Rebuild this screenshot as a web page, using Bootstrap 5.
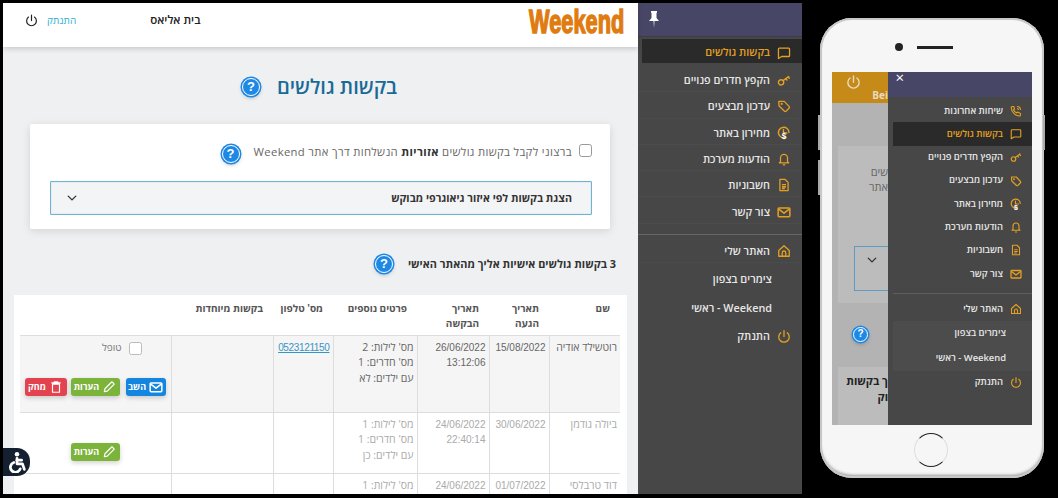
<!DOCTYPE html>
<html lang="he" dir="rtl">
<head>
    <meta charset="UTF-8">
    <title>בקשות גולשים</title>
    <meta name="viewport" content="width=device-width, initial-scale=1">
    <link href="https://cdn.jsdelivr.net/npm/bootstrap@5.3.2/dist/css/bootstrap.min.css" rel="stylesheet">
    <style>
        html, body { height: 498px; }
        body {
            background: #000;
            overflow: hidden;
            margin: 0;
            font-family: "Open Sans", "Liberation Sans", sans-serif;
            font-size: 11px;
            color: #333;
        }
        .collage { height: 498px; padding: 3px 14px 4px 2px; gap: 18px; direction: ltr; }
        .collage > * { direction: rtl; }

        /* desktop window */
        .desk { width: 800px; height: 491px; overflow: hidden; position: relative; padding-left: 1px; flex: none; }
        .side { width: 164px; flex: none; background: #474747; }
        .side-head { height: 34px; background: #474666; padding-right: 143px; padding-top: 7px; border-bottom: 1px solid #3b3b4c; }
        .main-area { width: 635px; flex: none; background: #eef0f2; }

        .topbar { height: 44px; background: #fff; box-shadow: 0 2px 5px rgba(0,0,0,.16); padding: 0 14px 10px 22px; position: relative; }
        .logo { font-family: "Liberation Sans", sans-serif; font-weight: 700; font-size: 33px; color: #e07b10; -webkit-text-stroke: 1.500px #e07b10; line-height: 1; margin-top: 2px; direction: ltr; transform: scaleX(.66); transform-origin: right center; }
        .user-name { font-size: 11.500px; font-weight: 600; color: #222; margin-left: 74px; }
        .logout-link { font-size: 10px; color: #2fb0d0; text-decoration: none; margin-left: 9px; }
        .logout-ico { width: 13px; height: 14px; color: #222; }

        .page-title { margin: 28px 0 0; height: 24px; gap: 17px; padding-right: 2px; }
        .page-title h1 { font-size: 20px; font-weight: 600; color: #1a6a96; margin: 0; }
        .help-dot {
            width: 18px; height: 18px; flex: none; border-radius: 50%; background: #1e88e5; color: #fff;
            border: 1.500px solid #fff; box-shadow: 0 0 0 1.500px #1e88e5, 0 2px 4px rgba(0,0,0,.25);
            font: 700 13px/15px "Liberation Sans", sans-serif; text-align: center; direction: ltr;
        }

        .opt-card { width: 580px; height: 105px; margin: 25px 28px 0 0; padding: 19px 18px 0 20px; border: 0; border-radius: 2px; box-shadow: 0 2px 8px rgba(0,0,0,.12); }
        .opt-line { height: 14px; color: #666; font-size: 11.250px; letter-spacing: .35px; }
        .opt-check { width: 13px; height: 13px; margin: 0 0 0 7px; border-color: #999; flex: none; }
        .opt-line b { color: #333; }
        .opt-line span:not(.help-dot) { margin-top: 4px; }
        .opt-line .help-dot { margin-right: 14px; margin-top: 8px; }
        .region-btn { height: 34px; margin-top: 24px; width: 100%; border: 1px solid #6fb3d2; border-radius: 1px; background: #f3f4f5; padding: 0 19px 0 15px; font-size: 10.700px; font-weight: 700; color: #333; box-shadow: inset 0 0 1px #6fb3d2; }
        .chev { width: 12px; height: 12px; color: #333; }

        .req-head { margin: 25px 22px 0 0; height: 20px; font-size: 10.900px; font-weight: 700; color: #333; gap: 15px; }

        .table-panel { background: #fff; margin: 21px 11px 0 11px; padding: 0 7px 0 6px; height: 220px; }
        .req-table { table-layout: fixed; width: 600px; margin: 0; font-size: 10.500px; border-collapse: collapse; }
        .req-table th { height: 40px; padding: 6px 10px 0 0; vertical-align: top; font-size: 10px; font-weight: 700; color: #555; line-height: 15px; border-bottom: 1px solid #ddd; background: #fff; box-shadow: none; }
        .req-table td { padding: 4px 3px 0 0; vertical-align: top; line-height: 15.500px; color: #666; border: 0; border-left: 1px solid #ddd; border-bottom: 1px solid #ddd; background: transparent; box-shadow: none; }
        .req-table td:last-child { border-left: 0; }
        .req-table th:nth-child(1) { width: 71px; }
        .req-table th:nth-child(2) { width: 60px; }
        .req-table th:nth-child(3) { width: 72px; }
        .req-table th:nth-child(4) { width: 84px; }
        .req-table th:nth-child(5) { width: 60px; }
        .req-table th:nth-child(6) { width: 102px; }
        .req-table tr.row-open td { height: 77px; background: #f5f5f5; }
        .req-table tr.row-done td { height: 61px; color: #aaa; }
        .req-table td.req-num { font-family: "Liberation Sans", sans-serif; font-size: 10px; }
        .req-table a { color: #3a94c4; letter-spacing: -.35px; }
        .done-check { height: 14px; padding: 3px 26px 0 0; color: #777; font-size: 10px; gap: 7px; }
        .done-check input { width: 13px; height: 13px; margin: 0; border-color: #bbb; }
        .act-row { padding-right: 2px; gap: 4px; }
        .open-acts { margin-top: 24px; }
        .done-acts { margin-top: 26px; }
        .act-btn { height: 18px; padding: 0 3px; font-size: 9px; font-weight: 700; line-height: 18px; border: 0; border-radius: 3px; color: #fff; gap: 3px; box-shadow: 0 2px 5px rgba(0,0,0,.18); }
        .act-btn svg { width: 14px; height: 14px; flex: none; }
        .act-reply { background: #1486e0; width: 40px; margin-left: 2px; }
        .act-note { background: #7cb33a; width: 49px; }
        .act-del { background: #e2434f; width: 42px; }

        .a11y { position: absolute; left: 1px; top: 445px; width: 27px; height: 28px; background: #14202f; border-radius: 0 13px 13px 0; color: #fff; }
        .a11y svg { width: 22px; height: 22px; }

        /* side menu */
        .menu-link { height: 26.300px; padding: 3px 11px 0 0; font-size: 10.800px; font-weight: 600; color: #e6e6e6; gap: 7px; border-bottom: 1px solid #4c4c4c; }
        .menu-link:last-child { border-bottom: 0; }
        .menu-link svg { width: 14px; height: 14px; color: #e5a021; flex: none; }
        .menu-link.on { background: #2a2a2a; color: #e5a021; border-bottom: 0; }
        .side-nav { padding-top: 2px; }
        .side-nav .menu-link.on { margin-left: 4px; height: 24px; margin-bottom: 3px; }
        .menu-sub { height: 29px; padding: 3px 30px 0 0; font-size: 10.800px; font-weight: 600; color: #e6e6e6; }
        .menu-rule { height: 1px; background: #666; margin: 10px 0 2px; }

        /* phone */
        .phone { width: 224px; height: 460px; margin-top: 15px; flex: none; background: #f6f6f6; border-radius: 32px; box-shadow: inset 0 0 0 2px #c8c8c8, inset 0 -3px 3px #999; padding: 54px 12px 53px; position: relative; }
        .phone::before { content: ""; position: absolute; left: -2px; top: 97px; width: 2px; height: 35px; background: #aaa; box-shadow: 0 45px 0 #aaa; }
        .phone::after { content: ""; position: absolute; right: -1px; top: 97px; width: 2px; height: 35px; background: #aaa; }
        .phone-top { position: absolute; top: 25px; left: 0; right: 0; height: 8px; gap: 14px; direction: ltr; padding-right: 16px; }
        .phone-cam { width: 8px; height: 8px; border-radius: 50%; background: #222; }
        .phone-speaker { width: 36px; height: 3px; background: #222; }
        .phone-home { position: absolute; bottom: 11px; left: 94px; width: 34px; height: 34px; border-radius: 50%; border: 1.500px solid #222; border-left-color: #ddd; border-right-color: #ddd; }
        .phone-screen { height: 353px; background: #b3b3b3; }
        .m-menu { width: 144px; flex: none; background: #474747; }
        .m-head { height: 25px; background: #474666; padding: 0 128px 0 0; color: #fff; font-size: 15px; line-height: 10px; }
        .m-nav { padding-top: 2px; }
        .m-link { height: 23.300px; padding: 0 10px 0 0; font-size: 9.400px; font-weight: 600; color: #e6e6e6; gap: 7px; }
        .m-link svg { width: 12px; height: 12px; color: #e5a021; flex: none; }
        .m-link.on { background: #2a2a2a; color: #e5a021; margin-left: 5px; }
        .m-rule { height: 1px; background: #5e5e5e; margin: 8px 0 3px 5px; }
        .m-sub { height: 25px; padding: 0 26px 0 0; margin-left: 5px; font-size: 9.400px; font-weight: 600; color: #e6e6e6; background: #4c4c4c; }
        .m-dim { width: 56px; flex: none; overflow: hidden; }
        .m-dim-head { height: 31px; background: #c58a18; color: #e9dcc0; padding: 2px 27px 0 0; font-weight: 700; font-size: 10px; }
        .m-dim-head svg { width: 15px; height: 15px; display: block; margin-left: -4px; }
        .m-dim-head span { display: block; margin: 0 -27px 0 0; line-height: 13px; text-align: right; }
        .m-dim-card { background: #bcbcbc; margin: 43px 0 0 6px; height: 157px; padding-top: 18px; font-size: 11px; line-height: 15px; color: #666; text-align: right; }
        .m-dim-box { height: 45px; margin: 52px 0 0 16px; border: 1px solid #5b9cc4; border-right: 0; padding: 7px 0 0 11px; direction: ltr; }
        .m-dim-box svg { display: block; }
        .m-dim-help { width: 15px; height: 15px; margin: 24px 20px 0 0; font-size: 10px; line-height: 12px; }
        .m-dim-card2 { background: #bcbcbc; margin: 25px 0 0 6px; height: 58px; padding-top: 6px; font-size: 11px; font-weight: 700; line-height: 16px; color: #222; text-align: right; overflow: hidden; white-space: nowrap; }
    </style>
</head>
<body>

    <!-- icons used by both menus -->
    <svg class="d-none">
        <symbol id="i-chat" viewBox="0 0 24 24" fill="none" stroke="currentColor" stroke-width="2.200" stroke-linejoin="round"><path d="M2.500 5a1.500 1.500 0 0 1 1.500-1.500h16A1.500 1.500 0 0 1 21.500 5v11.500A1.500 1.500 0 0 1 20 18H8l-5.500 3.500z"/></symbol>
        <symbol id="i-key" viewBox="0 0 24 24" fill="none" stroke="currentColor" stroke-width="2.400" stroke-linecap="round"><circle cx="7" cy="16" r="4.500"/><path d="M10.500 13 20 6M15 9.500l2 2.500M19 6.500l2 2.500"/></symbol>
        <symbol id="i-tag" viewBox="0 0 24 24" fill="none" stroke="currentColor" stroke-width="2.200" stroke-linejoin="round"><path d="M3 4h9.500L21 13a2 2 0 0 1 0 2.500L15.500 21a2 2 0 0 1-2.500 0L3.500 12z"/><circle cx="8" cy="8.500" r=".8"/></symbol>
        <symbol id="i-clock" viewBox="0 0 24 24" fill="none" stroke="currentColor" stroke-width="2.400" stroke-linecap="round"><path d="M15 19.500A9 9 0 1 1 20.500 11"/><path d="M11 6v6h6"/><text x="16" y="23" font-size="14" font-weight="700" fill="#fff" stroke="none" font-family="Liberation Sans">$</text></symbol>
        <symbol id="i-bell" viewBox="0 0 24 24" fill="none" stroke="currentColor" stroke-width="2.200" stroke-linejoin="round"><path d="M6 17V10a6 6 0 0 1 12 0v7l2 1.500H4z"/><path d="M10 22h4"/></symbol>
        <symbol id="i-doc" viewBox="0 0 24 24" fill="none" stroke="currentColor" stroke-width="2.200" stroke-linejoin="round"><path d="M5 2.500h9l5 5V21.500H5z"/><path d="M8.500 11.500h7M8.500 15h7M8.500 18h5"/></symbol>
        <symbol id="i-mail" viewBox="0 0 24 24" fill="none" stroke="currentColor" stroke-width="2.600" stroke-linejoin="round"><rect x="2" y="5" width="20" height="15" rx="1.500"/><path d="m3 7 9 7 9-7"/></symbol>
        <symbol id="i-home" viewBox="0 0 24 24" fill="none" stroke="currentColor" stroke-width="2.200" stroke-linejoin="round"><path d="M3 11 12 3l9 8v10H3z"/><path d="M9 21v-6a3 3 0 0 1 6 0v6"/></symbol>
        <symbol id="i-power" viewBox="0 0 24 24" fill="none" stroke="currentColor" stroke-width="2.200" stroke-linecap="round"><path d="M12 3v10M6.500 6.500a9 9 0 1 0 11 0"/></symbol>
        <symbol id="i-call" viewBox="0 0 24 24" fill="none" stroke="currentColor" stroke-width="2.200" stroke-linejoin="round"><path d="M21 17v3a2 2 0 0 1-2 2C10.500 21.500 3 14 2.500 5.500a2 2 0 0 1 2-2.500h3l1.500 5-2 1.500c1 2.500 3.500 5 6.500 6.500l1.500-2z"/><path d="M14 3a7 7 0 0 1 7 7M14 7a3 3 0 0 1 3 3"/></symbol>
        <symbol id="i-pen" viewBox="0 0 24 24" fill="none" stroke="currentColor" stroke-width="2" stroke-linejoin="round"><path d="M4 20l1-5L17 3l4 4L9 19z"/></symbol>
        <symbol id="i-trash" viewBox="0 0 24 24" fill="none" stroke="currentColor" stroke-width="2" stroke-linejoin="round"><path d="M6 7h12v14H6zM4 5h16M9 5V3h6v2"/></symbol>
        <symbol id="i-chev" viewBox="0 0 16 16" fill="none" stroke="currentColor" stroke-width="1.800" stroke-linecap="round" stroke-linejoin="round"><path d="m3 5.500 5 5 5-5"/></symbol>
    </svg>

    <div class="collage d-flex align-items-start">

        <!-- desktop -->
        <div class="desk d-flex">
            <aside class="side">
                <div class="side-head">
                    <svg width="10" height="17" viewBox="0 0 10 17" fill="#fff"><path d="M2 0h6v1.500L7.500 2v5L10 10H5.500L5 17l-.5-7H0l2.500-3V2L2 1.500z"/></svg>
                </div>
                <nav class="side-nav nav flex-column">
                    <a class="menu-link on d-flex align-items-center text-decoration-none" href="#"><svg><use href="#i-chat"/></svg>בקשות גולשים</a>
                    <a class="menu-link d-flex align-items-center text-decoration-none" href="#"><svg><use href="#i-key"/></svg>הקפץ חדרים פנויים</a>
                    <a class="menu-link d-flex align-items-center text-decoration-none" href="#"><svg><use href="#i-tag"/></svg>עדכון מבצעים</a>
                    <a class="menu-link d-flex align-items-center text-decoration-none" href="#"><svg><use href="#i-clock"/></svg>מחירון באתר</a>
                    <a class="menu-link d-flex align-items-center text-decoration-none" href="#"><svg><use href="#i-bell"/></svg>הודעות מערכת</a>
                    <a class="menu-link d-flex align-items-center text-decoration-none" href="#"><svg><use href="#i-doc"/></svg>חשבוניות</a>
                    <a class="menu-link d-flex align-items-center text-decoration-none" href="#"><svg><use href="#i-mail"/></svg>צור קשר</a>
                    <div class="menu-rule"></div>
                    <a class="menu-link d-flex align-items-center text-decoration-none" href="#"><svg><use href="#i-home"/></svg>האתר שלי</a>
                    <a class="menu-sub d-flex align-items-center text-decoration-none" href="#">צימרים בצפון</a>
                    <a class="menu-sub d-flex align-items-center text-decoration-none" href="#">Weekend - ראשי</a>
                    <a class="menu-link d-flex align-items-center text-decoration-none" href="#"><svg><use href="#i-power"/></svg>התנתק</a>
                </nav>
            </aside>

            <main class="main-area">
                <header class="topbar d-flex align-items-center justify-content-between">
                    <div class="logo">Weekend</div>
                    <div class="d-flex align-items-center">
                        <span class="user-name">בית אליאס</span>
                        <a class="logout-link" href="#">התנתק</a>
                        <svg class="logout-ico"><use href="#i-power"/></svg>
                    </div>
                </header>

                <div class="page-title d-flex align-items-center justify-content-center">
                    <h1>בקשות גולשים</h1>
                    <span class="help-dot">?</span>
                </div>

                <div class="opt-card card">
                    <div class="opt-line d-flex align-items-center">
                        <input class="form-check-input opt-check" type="checkbox">
                        <span>ברצוני לקבל בקשות גולשים <b>אזוריות</b> הנשלחות דרך אתר Weekend</span>
                        <span class="help-dot">?</span>
                    </div>
                    <button class="region-btn d-flex align-items-center justify-content-between" type="button">
                        <span>הצגת בקשות לפי איזור גיאוגרפי מבוקש</span>
                        <svg class="chev"><use href="#i-chev"/></svg>
                    </button>
                </div>

                <div class="req-head d-flex align-items-center">
                    <span>3 בקשות גולשים אישיות אליך מהאתר האישי</span>
                    <span class="help-dot">?</span>
                </div>

                <div class="table-panel">
                    <table class="table req-table">
                        <thead>
                            <tr>
                                <th>שם</th>
                                <th>תאריך הגעה</th>
                                <th>תאריך הבקשה</th>
                                <th>פרטים נוספים</th>
                                <th>מס' טלפון</th>
                                <th>בקשות מיוחדות</th>
                                <th></th>
                            </tr>
                        </thead>
                        <tbody>
                            <tr class="row-open">
                                <td>רוטשילד אודיה</td>
                                <td class="req-num">15/08/2022</td>
                                <td class="req-num">26/06/2022<br>13:12:06</td>
                                <td>מס' לילות: 2<br>מס' חדרים: 1<br>עם ילדים: לא</td>
                                <td class="req-num"><a href="#">0523121150</a></td>
                                <td></td>
                                <td>
                                    <label class="done-check d-flex align-items-center">
                                        <input class="form-check-input" type="checkbox">
                                        <span>טופל</span>
                                    </label>
                                    <div class="act-row open-acts d-flex">
                                        <button class="act-btn act-reply d-flex align-items-center justify-content-center" type="button"><svg><use href="#i-mail"/></svg>השב</button>
                                        <button class="act-btn act-note d-flex align-items-center justify-content-center" type="button"><svg><use href="#i-pen"/></svg>הערות</button>
                                        <button class="act-btn act-del d-flex align-items-center justify-content-center" type="button"><svg><use href="#i-trash"/></svg>מחק</button>
                                    </div>
                                </td>
                            </tr>
                            <tr class="row-done">
                                <td>ביולה גודמן</td>
                                <td class="req-num">30/06/2022</td>
                                <td class="req-num">24/06/2022<br>22:40:14</td>
                                <td>מס' לילות: 1<br>מס' חדרים: 1<br>עם ילדים: כן</td>
                                <td></td>
                                <td></td>
                                <td>
                                    <div class="act-row done-acts d-flex">
                                        <span class="act-reply invisible"></span>
                                        <button class="act-btn act-note d-flex align-items-center justify-content-center" type="button"><svg><use href="#i-pen"/></svg>הערות</button>
                                    </div>
                                </td>
                            </tr>
                            <tr class="row-done">
                                <td>דוד טרבלסי</td>
                                <td class="req-num">01/07/2022</td>
                                <td class="req-num">24/06/2022</td>
                                <td>מס' לילות: 1</td>
                                <td></td>
                                <td></td>
                                <td></td>
                            </tr>
                        </tbody>
                    </table>
                </div>
            </main>

            <div class="a11y d-flex align-items-center justify-content-center">
                <svg viewBox="0 0 24 24" fill="none" stroke="currentColor" stroke-width="3" stroke-linecap="round" stroke-linejoin="round"><circle cx="12" cy="3.500" r="2.500" fill="currentColor" stroke="none"/><path d="M12 8v6h6l2 6"/><path d="M12 10h5"/><path d="M8.500 12.500a5.500 5.500 0 1 0 7 7"/></svg>
            </div>
        </div>

        <!-- phone -->
        <div class="phone">
            <div class="phone-top d-flex align-items-center justify-content-center">
                <span class="phone-cam"></span>
                <span class="phone-speaker"></span>
            </div>
            <div class="phone-screen d-flex">
                <div class="m-menu">
                    <div class="m-head d-flex">×</div>
                    <nav class="m-nav nav flex-column">
                        <a class="m-link d-flex align-items-center text-decoration-none" href="#"><svg><use href="#i-call"/></svg>שיחות אחרונות</a>
                        <a class="m-link on d-flex align-items-center text-decoration-none" href="#"><svg><use href="#i-chat"/></svg>בקשות גולשים</a>
                        <a class="m-link d-flex align-items-center text-decoration-none" href="#"><svg><use href="#i-key"/></svg>הקפץ חדרים פנויים</a>
                        <a class="m-link d-flex align-items-center text-decoration-none" href="#"><svg><use href="#i-tag"/></svg>עדכון מבצעים</a>
                        <a class="m-link d-flex align-items-center text-decoration-none" href="#"><svg><use href="#i-clock"/></svg>מחירון באתר</a>
                        <a class="m-link d-flex align-items-center text-decoration-none" href="#"><svg><use href="#i-bell"/></svg>הודעות מערכת</a>
                        <a class="m-link d-flex align-items-center text-decoration-none" href="#"><svg><use href="#i-doc"/></svg>חשבוניות</a>
                        <a class="m-link d-flex align-items-center text-decoration-none" href="#"><svg><use href="#i-mail"/></svg>צור קשר</a>
                        <div class="m-rule"></div>
                        <a class="m-link d-flex align-items-center text-decoration-none" href="#"><svg><use href="#i-home"/></svg>האתר שלי</a>
                        <a class="m-sub d-flex align-items-center text-decoration-none" href="#">צימרים בצפון</a>
                        <a class="m-sub d-flex align-items-center text-decoration-none" href="#">Weekend - ראשי</a>
                        <a class="m-link d-flex align-items-center text-decoration-none" href="#"><svg><use href="#i-power"/></svg>התנתק</a>
                    </nav>
                </div>
                <div class="m-dim">
                    <div class="m-dim-head"><svg><use href="#i-power"/></svg><span>Bei</span></div>
                    <div class="m-dim-card">
                        <div>שים</div>
                        <div>אתר</div>
                        <div class="m-dim-box"><svg class="chev"><use href="#i-chev"/></svg></div>
                    </div>
                    <div class="help-dot m-dim-help">?</div>
                    <div class="m-dim-card2">
                        <div>ך בקשות</div>
                        <div>וק</div>
                    </div>
                </div>
            </div>
            <div class="phone-home"></div>
        </div>
    </div>

    <script src="https://cdn.jsdelivr.net/npm/bootstrap@5.3.2/dist/js/bootstrap.bundle.min.js"></script>
</body>
</html>
